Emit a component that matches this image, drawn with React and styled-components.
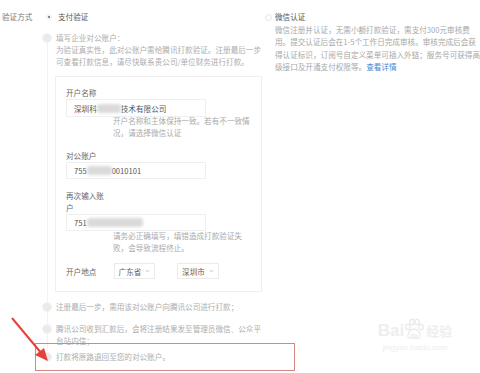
import React from 'react'
import styled, { createGlobalStyle } from 'styled-components'

const Global = createGlobalStyle`
    html, body {
        margin: 0;
        padding: 0;
        background: #fff;
    }
    body {
        font-family: "Noto Sans CJK SC", "Noto Sans", sans-serif;
        font-size: 7.6px;
        color: #999;
    }
`

const Page = styled.main`
    position: relative;
    width: 480px;
    height: 373px;
    overflow: hidden;
    display: flex;
    align-items: flex-start;
`
const FieldLabel = styled.div`
    width: 40px;
    padding: 11px 0 0 2px;
    line-height: 12px;
    color: #777;
`
const Option = styled.section`
    width: ${p => p.$width};
    padding-top: 11px;
    padding-left: ${p => p.$pad || 0}px;
`
const OptionHead = styled.div`
    display: flex;
    align-items: center;
    gap: ${p => p.$gap}px;
    line-height: 12px;
    color: #555;
`
const RadioOn = styled.span`
    margin-left: 4px;
    width: 6px;
    height: 6px;
    border-radius: 50%;
    box-sizing: border-box;
    border: 1px solid #eee;
    background: radial-gradient(circle, #888 0 1.4px, #fff 1.6px);
`
const RadioOff = styled.span`
    width: 7px;
    height: 7px;
    border-radius: 50%;
    box-sizing: border-box;
    border: 1px solid #e4e4e4;
    background: #fff;
`
const Steps = styled.div`
    position: relative;
    margin-top: 9px;
    &::before {
        content: "";
        position: absolute;
        left: 5px;
        top: 8px;
        bottom: 12px;
        border-left: 1px solid #f2f2f2;
    }
`
const Step = styled.div`
    position: relative;
    display: flex;
    align-items: flex-start;
    gap: 4px;
    margin-top: ${p => p.$top || 0}px;
    line-height: 12px;
    color: #adadad;
`
const Dot = styled.span`
    flex: none;
    width: 10px;
    height: 10px;
    margin-top: 1px;
    border-radius: 50%;
    background: #ebebeb;
    border: 1px solid #f4f4f4;
    box-sizing: border-box;
`
const StepBody = styled.div`
    white-space: nowrap;
`
const Card = styled.div`
    margin: 8px 0 0 13px;
    width: 207px;
    box-sizing: border-box;
    border: 1px solid #efefef;
    padding: 10px 10px 12px;
`
const Label = styled.div`
    width: 40px;
    line-height: 12px;
    margin-top: ${p => p.$top || 0}px;
    color: #666;
`
const Input = styled.div`
    width: 140px;
    height: ${p => p.$h || 17}px;
    box-sizing: border-box;
    border: 1px solid #efefef;
    padding-left: 7px;
    display: flex;
    align-items: center;
    color: #555;
    white-space: nowrap;
`
const Blur = styled.span`
    display: inline-block;
    width: ${p => p.$w}px;
    height: 9px;
    background: #dadada;
    border-radius: 3px;
    filter: blur(1.6px);
`
const Hint = styled.div`
    margin: ${p => p.$top || 0}px 0 0 47px;
    line-height: 12px;
    white-space: nowrap;
    color: #aaa;
`
const Location = styled.div`
    display: flex;
    align-items: center;
    margin-top: 9px;
`
const LocationLabel = styled.span`
    width: 48px;
    color: #666;
`
const Select = styled.div`
    width: ${p => p.$w}px;
    height: 16px;
    margin-right: ${p => p.$gap || 0}px;
    box-sizing: border-box;
    border: 1px solid #ebebeb;
    display: flex;
    align-items: center;
    justify-content: center;
    gap: 4px;
    color: #666;
`
const WechatText = styled.div`
    margin: 1px 0 0 10px;
    line-height: 12.3px;
    white-space: nowrap;
    color: #a8a8a8;
`
const Link = styled.a`
    color: #4a86d6;
    text-decoration: none;
`
const Highlight = styled.div`
    position: absolute;
    left: 35px;
    top: 343px;
    width: 260px;
    height: 28px;
    box-sizing: border-box;
    border: 1px solid #d98583;
`
const Arrow = styled.svg`
    position: absolute;
    left: 0;
    top: 310px;
`
const Watermark = styled.div`
    position: absolute;
    left: 370px;
    top: 318px;
    width: 90px;
    color: #eeeeee;
    text-align: center;
`
const MarkRow = styled.div`
    display: flex;
    align-items: flex-end;
    justify-content: center;
    font-family: "Liberation Sans", sans-serif;
    font-size: 17px;
    font-weight: bold;
    line-height: 18px;
`
const MarkCn = styled.span`
    font-family: "Noto Sans CJK SC", sans-serif;
    font-size: 13px;
    margin-left: 2px;
`
const MarkUrl = styled.div`
    font-family: "Liberation Sans", sans-serif;
    font-size: 8px;
    margin-top: 3px;
`

const Caret = () => (
    <svg width="5" height="4" viewBox="0 0 5 4">
        <path d="M0.5 1 L2.5 3 L4.5 1" fill="none" stroke="#c4c4c4" strokeWidth="0.9" />
    </svg>
)

const Paw = () => (
    <svg width="20" height="22" viewBox="0 0 20 22">
        <g fill="none" stroke="#ebebeb" strokeWidth="1.4">
            <ellipse cx="4" cy="9" rx="2.2" ry="2.8" />
            <ellipse cx="8" cy="4" rx="2.2" ry="2.8" />
            <ellipse cx="13" cy="4" rx="2.2" ry="2.8" />
            <ellipse cx="17" cy="9" rx="2.2" ry="2.8" />
            <path d="M10 11 C6 11 3 16 4 19 C5 21 8 20 10 20 C12 20 15 21 16 19 C17 16 14 11 10 11 Z" />
        </g>
        <text x="10" y="18.5" fontSize="6" textAnchor="middle" fill="#ebebeb" fontFamily="Liberation Sans">du</text>
    </svg>
)

const App = () => {
    return (
        <>
            <Global />
            <Page>
                <FieldLabel>验证方式</FieldLabel>
                <Option $width="220px">
                    <OptionHead $gap={6}>
                        <RadioOn />
                        <span>支付验证</span>
                    </OptionHead>
                    <Steps>
                        <Step>
                            <Dot />
                            <StepBody>
                                填写企业对公账户：<br />
                                为验证真实性，此对公账户需给腾讯打款验证。注册最后一步<br />
                                可查看打款信息，请尽快联系贵公司/单位财务进行打款。
                            </StepBody>
                        </Step>
                        <Card>
                            <Label>开户名称</Label>
                            <Input $h={18}>深圳科<Blur $w={24} />技术有限公司</Input>
                            <Hint $top={-2}>
                                开户名称和主体保持一致。若有不一致情<br />
                                况，请选择微信认证
                            </Hint>
                            <Label $top={11}>对公账户</Label>
                            <Input>755<Blur $w={25} />0010101</Input>
                            <Label $top={11}>再次输入账户</Label>
                            <Input>751<Blur $w={56} /></Input>
                            <Hint $top={-1}>
                                请务必正确填写，填错造成打款验证失<br />
                                败，会导致流程终止。
                            </Hint>
                            <Location>
                                <LocationLabel>开户地点</LocationLabel>
                                <Select $w={41} $gap={22}>广东省<Caret /></Select>
                                <Select $w={42}>深圳市<Caret /></Select>
                            </Location>
                        </Card>
                        <Step $top={9}>
                            <Dot />
                            <StepBody>注册最后一步，需用该对公账户向腾讯公司进行打款；</StepBody>
                        </Step>
                        <Step $top={10}>
                            <Dot />
                            <StepBody>
                                腾讯公司收到汇款后，会将注册结果发至管理员微信、公众平<br />
                                台站内信；
                            </StepBody>
                        </Step>
                        <Step $top={4}>
                            <Dot />
                            <StepBody>打款将原路退回至您的对公账户。</StepBody>
                        </Step>
                    </Steps>
                </Option>
                <Option $width="215px" $pad={3}>
                    <OptionHead $gap={3}>
                        <RadioOff />
                        <span>微信认证</span>
                    </OptionHead>
                    <WechatText>
                        微信注册并认证，无需小额打款验证，需支付300元审核费<br />
                        用。提交认证后会在1-5个工作日完成审核。审核完成后会获<br />
                        得认证标识，订阅号自定义菜单可插入外链；服务号可获得高<br />
                        级接口及开通支付权限等。<Link href="#">查看详情</Link>
                    </WechatText>
                </Option>
                <Highlight />
                <Arrow width="60" height="60" viewBox="0 0 60 60">
                    <line x1="12" y1="8" x2="42" y2="44" stroke="#e8413b" strokeWidth="2" />
                    <polygon points="48,51 35,45 44,38" fill="#e8413b" />
                </Arrow>
                <Watermark>
                    <MarkRow>
                        Bai<Paw /><MarkCn>经验</MarkCn>
                    </MarkRow>
                    <MarkUrl>jingyan.baidu.com</MarkUrl>
                </Watermark>
            </Page>
        </>
    )
}

export default App
